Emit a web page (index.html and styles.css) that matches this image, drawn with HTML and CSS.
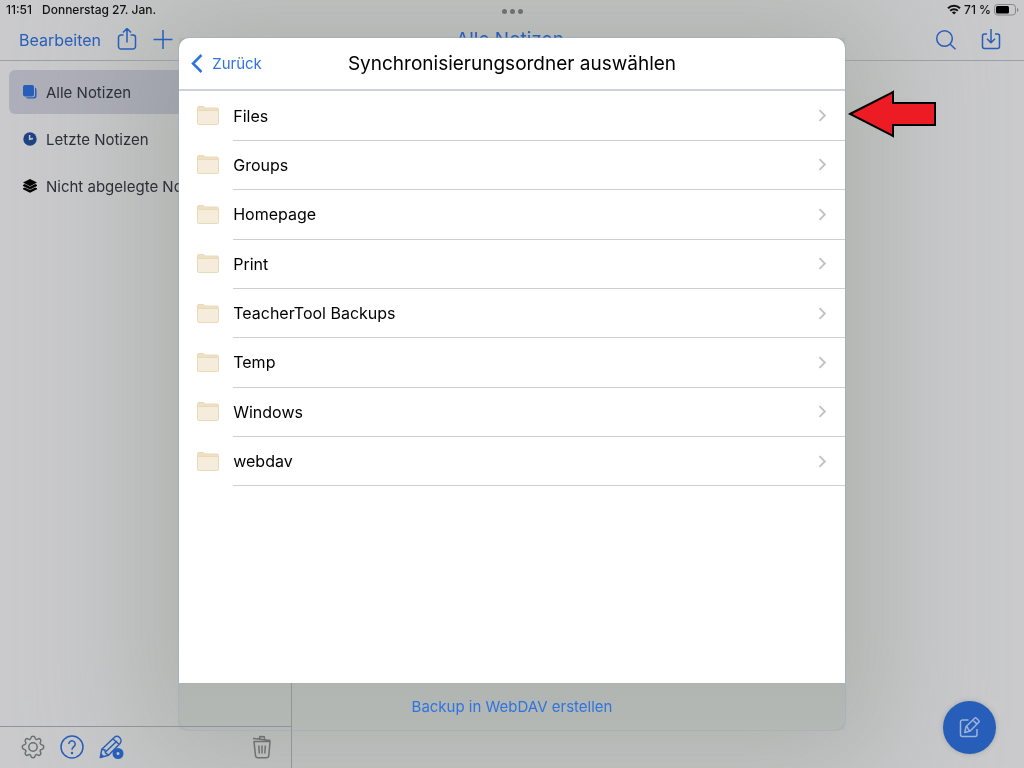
FILE: index.html
```html
<!DOCTYPE html>
<html lang="de">
<head>
    <meta charset="UTF-8">
    <meta name="viewport" content="width=device-width, initial-scale=1.0">
    <title>Alle Notizen</title>
    <link rel="stylesheet" href="styles.css">
</head>
<body>

<div class="shade"></div>

<div class="app">
    <header class="topbar">
        <!-- Statusleiste -->
        <div class="status">
            <div class="status-left"><span>11:51</span><span>Donnerstag 27. Jan.</span></div>
            <div class="dots"><i></i><i></i><i></i></div>
            <div class="status-right">
                <svg width="14" height="11" viewBox="0 0 14 11" fill="none" stroke="#111" stroke-width="2">
                    <path d="M1 4.2a8.6 8.6 0 0 1 12 0M3.2 6.7a5.4 5.4 0 0 1 7.6 0"/>
                    <path d="M7 10.6L4.9 8.5a3 3 0 0 1 4.2 0z" fill="#111" stroke="none"/>
                </svg>
                <span>71 %</span>
                <svg width="25" height="12" viewBox="0 0 25 12">
                    <rect x=".5" y=".5" width="21" height="10.5" rx="3" fill="none" stroke="#858788"/>
                    <rect x="2" y="2" width="13" height="7.5" rx="1.5" fill="#000"/>
                    <path d="M23 4v4q1.5-.6 1.5-2T23 4z" fill="#858788"/>
                </svg>
            </div>
        </div>

        <!-- Werkzeugleiste -->
        <div class="toolbar">
            <div class="tools">
                <button>Bearbeiten</button>
                <button aria-label="Teilen">
                    <svg width="20" height="24" viewBox="0 0 20 24" class="line">
                        <path d="M6.5 7H4a2.5 2.5 0 0 0-2.5 2.500v9A2.500 2.500 0 0 0 4 21h12a2.500 2.500 0 0 0 2.500-2.500v-9A2.500 2.500 0 0 0 16 7h-2.500M10 14.500V.8M6 4.500l4-4 4 4"/>
                    </svg>
                </button>
                <button aria-label="Neu">
                    <svg width="20" height="24" viewBox="0 0 20 24" class="line"><path d="M.5 11.500h19M10 2v19"/></svg>
                </button>
            </div>
            <h1>Alle Notizen</h1>
            <div class="tools tools-right">
                <button aria-label="Suchen">
                    <svg width="22" height="22" viewBox="0 0 22 22" class="line"><circle cx="9.500" cy="9.500" r="7.800"/><path d="M15.200 15.200l5.300 5"/></svg>
                </button>
                <button aria-label="Importieren">
                    <svg width="20" height="22" viewBox="0 0 20 22" class="line">
                        <path d="M6 5H3.500a2 2 0 0 0-2 2v10.500a2 2 0 0 0 2 2h13a2 2 0 0 0 2-2V7a2 2 0 0 0-2-2H14M10 0v13.500M6 9.800l4 4 4-4"/>
                    </svg>
                </button>
            </div>
        </div>
    </header>

    <div class="main">
        <aside class="sidebar">
            <nav>
                <a href="#" class="active">
                    <svg width="14" height="14" viewBox="0 0 14 14" fill="#275eb9">
                        <rect x="0" y="0" width="11" height="11.500" rx="2"/>
                        <path d="M12 2.500q1.500.3 1.500 2V11a2.500 2.500 0 0 1-2.500 2.500H5q-1.700 0-2-1.200h7a2 2 0 0 0 2-2z"/>
                    </svg>
                    Alle Notizen
                </a>
                <a href="#">
                    <svg width="14" height="14" viewBox="0 0 14 14">
                        <circle cx="7" cy="7" r="6.700" fill="#1e4283"/>
                        <path d="M6.600 3v4.300l3.400-.8" fill="none" stroke="#c5c7c8" stroke-width="1.500"/>
                    </svg>
                    Letzte Notizen
                </a>
                <a href="#">
                    <svg width="14" height="14" viewBox="0 0 14 14" fill="#050505">
                        <path d="M7 0l7 3.600-7 3.600-7-3.600z"/>
                        <path d="M0 6l1.800-.9L7 7.800l5.200-2.700L14 6v1L7 10.400 0 7z"/>
                        <path d="M0 9.300l1.800-.9L7 11.100l5.200-2.700 1.800.9v.9L7 13.800l-7-3.600z"/>
                    </svg>
                    Nicht abgelegte Notizen
                </a>
            </nav>
            <div class="bottombar">
                <button aria-label="Einstellungen">
                    <svg width="24" height="24" viewBox="0 0 24 24" class="line gray">
                        <circle cx="12" cy="12" r="4.200"/>
                        <path d="M12 1.200c1.800 0 1.900.5 2.100 1.700.3 1.500 1.300 2 2.600 1.200 1.100-.8 1.700-.8 2.600.1s.9 1.500.2 2.600c-.8 1.300-.4 2.500 1.200 2.900 1.500.3 2.100.6 2.100 2.300s-.5 2-2.100 2.400c-1.600.3-2 1.500-1.200 2.800.7 1.100.7 1.700-.2 2.600s-1.500.9-2.600.1c-1.300-.8-2.300-.3-2.600 1.200-.2 1.300-.4 1.700-2.100 1.700s-1.900-.5-2.100-1.700c-.3-1.500-1.300-2-2.600-1.200-1.100.8-1.700.8-2.600-.1s-.9-1.500-.2-2.600c.8-1.300.4-2.500-1.200-2.800C1.700 14 1.200 13.700 1.200 12s.5-2 2.100-2.300c1.600-.4 2-1.600 1.200-2.900-.7-1.100-.7-1.700.2-2.600s1.500-.9 2.600-.1c1.300.8 2.300.3 2.600-1.200.2-1.200.3-1.700 2.100-1.700z"/>
                    </svg>
                </button>
                <button aria-label="Hilfe">
                    <svg width="24" height="24" viewBox="0 0 24 24" class="line">
                        <circle cx="12" cy="12" r="11"/>
                        <path d="M8.800 9a3.200 3.200 0 1 1 5.300 2.400c-1.300 1.100-2.100 1.600-2.100 3.300"/>
                        <circle cx="12" cy="18" r=".5"/>
                    </svg>
                </button>
                <button aria-label="Stift">
                    <svg width="25" height="24" viewBox="0 0 25 24" class="line">
                        <path d="M1.300 22.500l1.500-8.300L15.500 2.300a3.300 3.300 0 0 1 5.200.5 4 4 0 0 1 .3 5.600L9.500 20.200zM2.800 14.200l3.100.8.600 2.800 3 2.400M7 16.500L18 6M14 4l6 5.200M1.500 22l2.800-.8-2.200-2z"/>
                        <circle cx="19" cy="18.500" r="3.500" fill="#c4c6c8" stroke-width="4"/>
                    </svg>
                </button>
                <button class="trash" aria-label="Papierkorb">
                    <svg width="20" height="24" viewBox="0 0 20 24" class="line gray">
                        <path d="M1 3.500l17.500 2M7.500 4l.3-2.500 4.500.3.200 2.700M2 6.500h16l-1.200 14q-.2 2.200-2.500 2.200H6q-2.300 0-2.500-2.200zM6.800 10.500l.5 8M10 10.500v8M13.300 10.500l-.5 8"/>
                    </svg>
                </button>
            </div>
        </aside>
        <section class="content">
            <button class="compose" aria-label="Neue Notiz">
                <svg width="22" height="22" viewBox="0 0 22 22" fill="none" stroke="#9eb4d8" stroke-width="1.500" stroke-linejoin="round">
                    <path d="M9.500 3H3.500a2 2 0 0 0-2 2v12.500a2 2 0 0 0 2 2H16a2 2 0 0 0 2-2V12"/>
                    <path d="M5.800 15.500l1.200-5.800 8.600-8.500q.9-.8 1.800 0l2.300 2.300q.8.900 0 1.800l-8.500 8.700zM7 9.700l1.500.6.700 1.900 2 1.800M13.800 3l4.200 4.100"/>
                </svg>
            </button>
        </section>
    </div>
</div>

<!-- Dialog zur Ordnerauswahl -->
<div class="overlay">
    <div class="dialog" role="dialog" aria-labelledby="dialog-title">
        <div class="dialog-header">
            <button class="back">
                <svg width="12" height="19" viewBox="0 0 12 19" fill="none" stroke="#2f73e0" stroke-width="2.500"><path d="M10.500 1L2 9.500l8.500 8.500"/></svg>
                Zurück
            </button>
            <h2 id="dialog-title">Synchronisierungsordner auswählen</h2>
        </div>
        <div class="dialog-body">
            <ul class="folders">
                <li><svg class="folder"><use href="#folder"/></svg><a href="#">Files <svg class="chevron"><use href="#chevron"/></svg></a></li>
                <li><svg class="folder"><use href="#folder"/></svg><a href="#">Groups <svg class="chevron"><use href="#chevron"/></svg></a></li>
                <li><svg class="folder"><use href="#folder"/></svg><a href="#">Homepage <svg class="chevron"><use href="#chevron"/></svg></a></li>
                <li><svg class="folder"><use href="#folder"/></svg><a href="#">Print <svg class="chevron"><use href="#chevron"/></svg></a></li>
                <li><svg class="folder"><use href="#folder"/></svg><a href="#">TeacherTool Backups <svg class="chevron"><use href="#chevron"/></svg></a></li>
                <li><svg class="folder"><use href="#folder"/></svg><a href="#">Temp <svg class="chevron"><use href="#chevron"/></svg></a></li>
                <li><svg class="folder"><use href="#folder"/></svg><a href="#">Windows <svg class="chevron"><use href="#chevron"/></svg></a></li>
                <li><svg class="folder"><use href="#folder"/></svg><a href="#">webdav <svg class="chevron"><use href="#chevron"/></svg></a></li>
            </ul>
        </div>
        <div class="dialog-footer">
            <button>Backup in WebDAV erstellen</button>
        </div>

        <svg class="arrow" width="90" height="48" viewBox="0 0 90 48">
            <path d="M2 24L45 2v11h42v22H45v11z" fill="#ed1c24" stroke="#000" stroke-width="2"/>
        </svg>
    </div>
</div>

<svg class="symbols">
    <symbol id="folder" viewBox="0 0 22 20">
        <path d="M.5 2Q.5.500 2 .5h4.500L8 2h12q1.500 0 1.500 1.500V6H.5z" fill="#eee0c3" stroke="#e8d9b8"/>
        <rect x=".5" y="4.500" width="21" height="14" rx="1" fill="#f5ecdb" stroke="#e8d9b8"/>
    </symbol>
    <symbol id="chevron" viewBox="0 0 8 12">
        <path d="M1.200 1l5 5-5 5" fill="none" stroke="#c0c1c4" stroke-width="1.700"/>
    </symbol>
</svg>

</body>
</html>
```
FILE: styles.css
```css
* {
    box-sizing: border-box;
}
body {
    margin: 0;
    font-family: Inter, "Liberation Sans", sans-serif;
    font-size: 16px;
    color: #2b2f36;
    background-color: #cacacc;
}
button {
    display: flex;
    align-items: center;
    padding: 0;
    border: none;
    background: none;
    font: inherit;
    color: #275eb9;
    cursor: pointer;
}
a {
    color: inherit;
    text-decoration: none;
}
svg {
    flex-shrink: 0;
}
.line {
    fill: none;
    stroke: #275eb9;
    stroke-width: 1.5;
    stroke-linejoin: round;
}
.gray {
    stroke: #6d7071;
}
.symbols {
    display: none;
}
.app {
    display: flex;
    flex-direction: column;
    height: 100vh;
}

/* Schatten hinter dem Dialog */
.shade {
    position: fixed;
    inset: 5% 17.5%;
    z-index: -1;
    background: linear-gradient(rgba(137, 149, 136, 0.4) 92%, rgba(137, 149, 136, 0.33));
    box-shadow: 0 0 110px 35px rgba(137, 149, 136, 0.45);
}

/* Kopfbereich */
.topbar {
    border-bottom: 1px solid #9c9fab;
}
.status, .toolbar {
    display: grid;
    grid-template-columns: 1fr auto 1fr;
    align-items: center;
}
.status {
    height: 19px;
    padding: 0 5px 0 6px;
    font-size: 12px;
    font-weight: 500;
    color: #111;
}
.status-left, .status-right {
    display: flex;
    align-items: center;
}
.status-left {
    gap: 10px;
}
.status-right {
    justify-content: flex-end;
    gap: 3px;
}
.dots {
    display: flex;
    gap: 3px;
    padding-top: 4px;
}
.dots i {
    width: 5px;
    height: 5px;
    border-radius: 50%;
    background-color: #6c706e;
}
.toolbar {
    height: 41px;
    padding: 0 23px 0 19px;
}
.tools {
    display: flex;
    align-items: center;
    gap: 16px;
}
.tools-right {
    justify-content: flex-end;
    gap: 24px;
}
h1, h2 {
    margin: 0;
    font-size: 19px;
    font-weight: 400;
}
h1 {
    color: #275eb9;
}

/* Seitenleiste */
.main {
    display: flex;
    flex: 1;
}
.sidebar {
    display: flex;
    flex-direction: column;
    width: 292px;
    border-right: 1px solid #909398;
}
.sidebar nav {
    display: flex;
    flex: 1;
    flex-direction: column;
    gap: 3px;
    padding: 9px;
    font-size: 15px;
}
.sidebar nav a {
    display: flex;
    align-items: center;
    gap: 9px;
    height: 44px;
    padding: 0 14px;
    border-radius: 6px;
}
.sidebar nav .active {
    background-color: rgba(90, 95, 130, 0.25);
}
.bottombar {
    display: flex;
    align-items: center;
    gap: 15px;
    height: 42px;
    padding: 0 19px 2px 21px;
    border-top: 1px solid #909398;
}
.trash {
    margin-left: auto;
}
.content {
    display: flex;
    flex: 1;
    align-items: flex-end;
    justify-content: flex-end;
    padding: 14px 28px;
}
.compose {
    justify-content: center;
    width: 53px;
    height: 53px;
    border-radius: 50%;
    background-color: #275eb9;
    box-shadow: 0 0 5px rgba(80, 90, 80, 0.3);
}

/* Dialog */
.overlay {
    position: fixed;
    inset: 0;
    display: flex;
    align-items: center;
    justify-content: center;
}
.dialog {
    position: relative;
    display: flex;
    flex-direction: column;
    width: 65%;
    height: 90%;
    border-radius: 10px;
    box-shadow: 0 0 0 1px rgba(150, 165, 190, 0.4);
}
.dialog-header {
    display: grid;
    grid-template-columns: 1fr auto 1fr;
    align-items: center;
    height: 53px;
    padding: 0 12px;
    border-bottom: 2px solid #cdd1da;
    border-radius: 10px 10px 0 0;
    background-color: #fff;
}
.dialog h2 {
    color: #000;
}
.back, .dialog-footer button {
    font-size: 15px;
    color: #2f73e0;
}
.back {
    gap: 9px;
}
.dialog-body {
    flex: 1;
    background-color: #fff;
    color: #000;
}
.folders {
    display: grid;
    grid-auto-rows: 1fr;
    min-height: 395px;
    margin: 0;
    padding: 0 0 0 18px;
    list-style: none;
}
.folders li {
    display: flex;
    align-items: center;
    gap: 14px;
}
.folders a {
    display: flex;
    flex: 1;
    align-items: center;
    justify-content: space-between;
    align-self: stretch;
    padding-right: 18px;
    border-bottom: 1px solid #cdcfd8;
}
.folder {
    width: 22px;
    height: 20px;
}
.chevron {
    width: 9px;
    height: 13px;
}
.dialog-footer {
    display: flex;
    align-items: center;
    justify-content: center;
    height: 47px;
}
.arrow {
    position: absolute;
    top: 52px;
    left: calc(100% + 3px);
}
```
